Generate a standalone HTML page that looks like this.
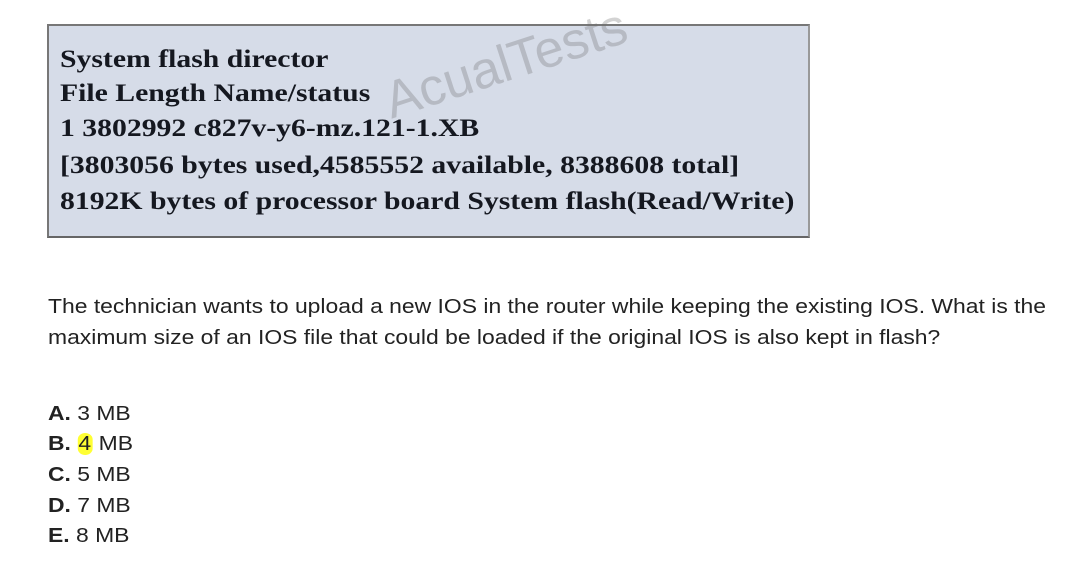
<!DOCTYPE html>
<html><head><style>
body{margin:0;width:1076px;height:577px;background:#fff;position:relative;overflow:hidden}
.box{position:absolute;left:47px;top:24px;width:759px;height:210px;background:#d6dce8;border:2px solid #777;border-right-color:#999;border-bottom-color:#666}
.box div{position:absolute;left:11px;font:bold 25.5px "Liberation Serif",serif;color:#151820;white-space:nowrap;transform:scaleX(1.165);transform-origin:0 0}
.wm{position:absolute;left:328px;top:48px;font:52px "Liberation Sans",sans-serif;color:rgba(110,110,110,.3);transform:rotate(-18deg);transform-origin:0 0;white-space:nowrap}
.t{position:absolute;left:48px;font:20px "Liberation Sans",sans-serif;color:#222;white-space:nowrap;transform:scaleX(1.145);transform-origin:0 0}
b{font-weight:bold}
.hl{background:#ffff33;border-radius:9px;padding:0 1px}
</style></head><body>
<div class="box">
<span class="wm">AcualTests</span>
<div style="top:18px">System flash director</div>
<div style="top:52px">File Length Name/status</div>
<div style="top:87px">1 3802992 c827v-y6-mz.121-1.XB</div>
<div style="top:124px">[3803056 bytes used,4585552 available, 8388608 total]</div>
<div style="top:160px">8192K bytes of processor board System flash(Read/Write)</div>
</div>
<div class="t" style="top:296px">The technician wants to upload a new IOS in the router while keeping the existing IOS. What is the</div>
<div class="t" style="top:327px">maximum size of an IOS file that could be loaded if the original IOS is also kept in flash?</div>
<div class="t" style="top:403px"><b>A.</b> 3 MB</div>
<div class="t" style="top:433px"><b>B.</b> <span class="hl">4</span> MB</div>
<div class="t" style="top:464px"><b>C.</b> 5 MB</div>
<div class="t" style="top:495px"><b>D.</b> 7 MB</div>
<div class="t" style="top:525px"><b>E.</b> 8 MB</div>
</body></html>
